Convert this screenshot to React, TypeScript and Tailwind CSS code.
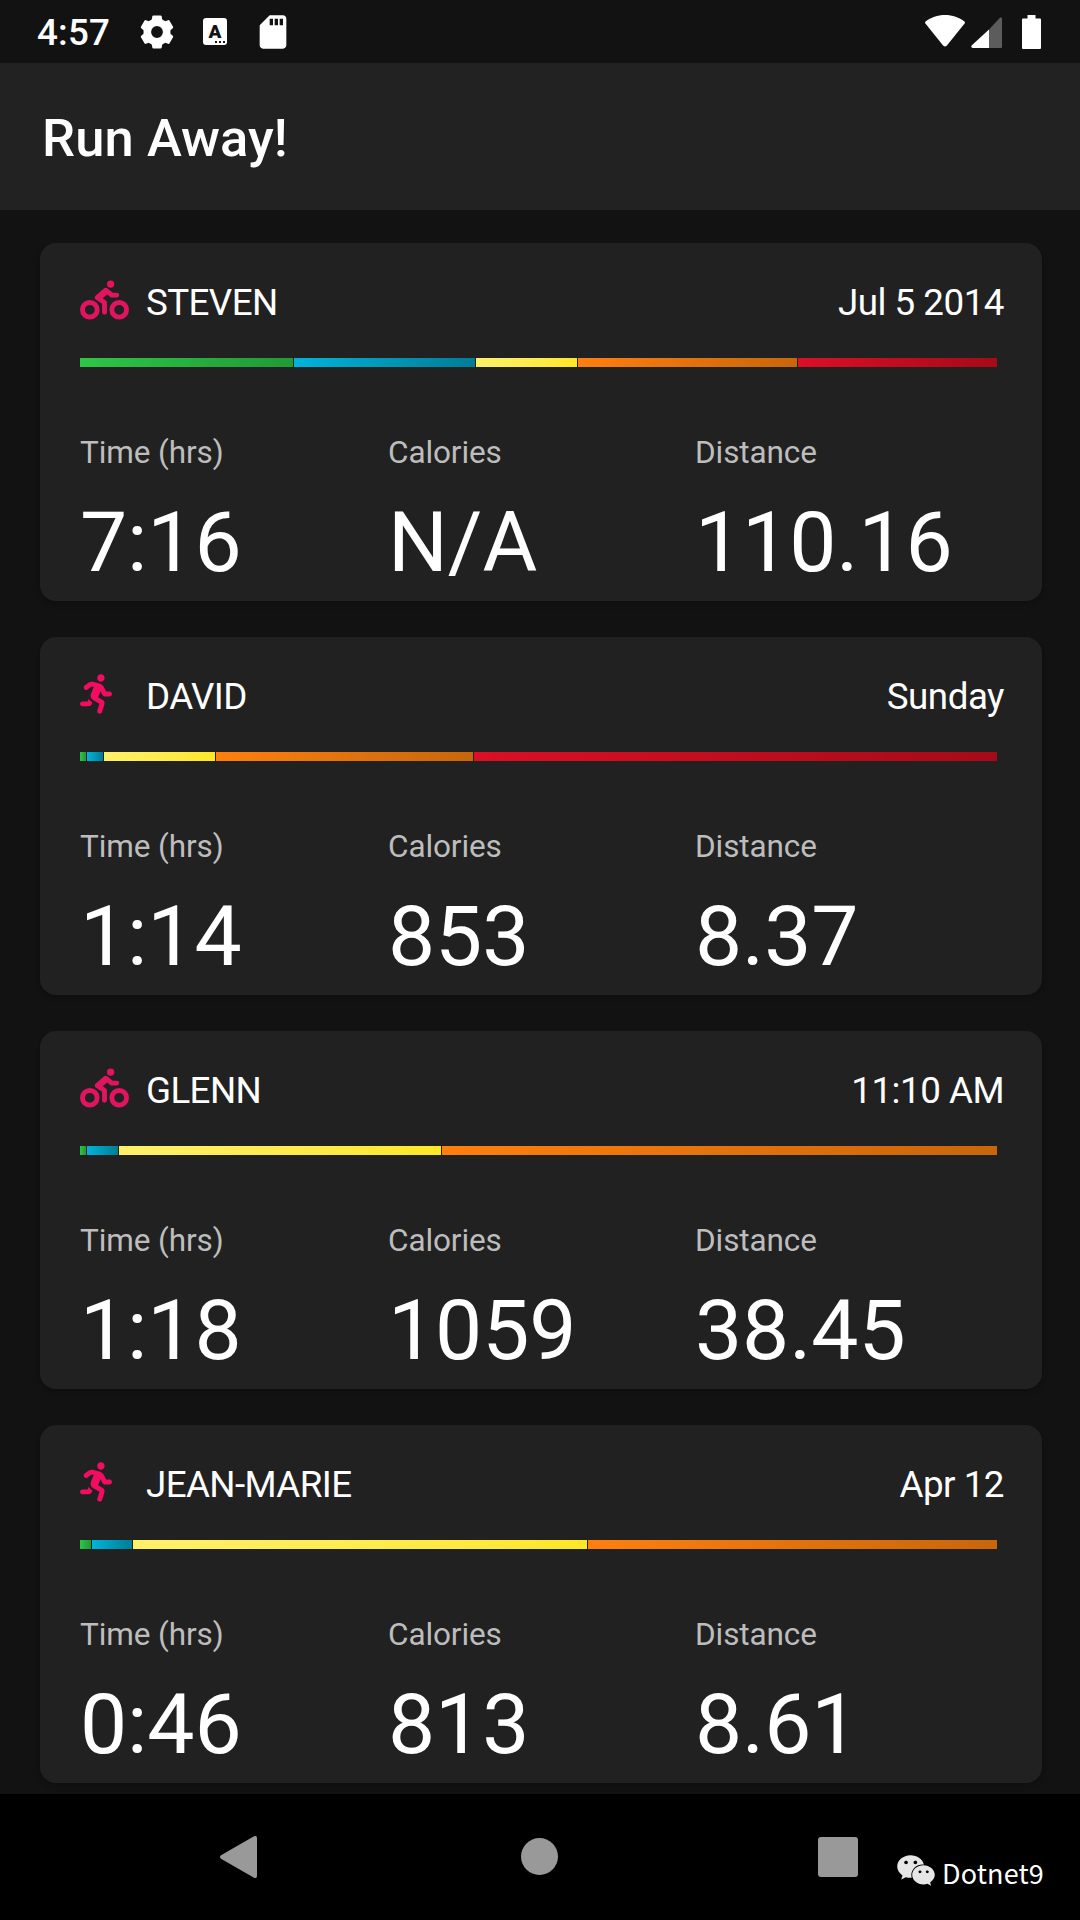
import { FaBiking, FaRunning, FaWeixin } from 'react-icons/fa'
import { MdSdStorage } from 'react-icons/md'
import { clsx } from 'clsx'

type Zone = 'easy' | 'light' | 'moderate' | 'hard' | 'max'

type Workout = {
  name: string
  date: string
  sport: 'bike' | 'run'
  zones: [Zone, number][]
  time: string
  calories: string
  distance: string
}

const ZONE_COLORS: Record<Zone, string> = {
  easy:     'from-[#2dc648] to-[#209a35]',
  light:    'from-[#00b4dc] to-[#007d96]',
  moderate: 'from-[#fff06a] to-[#fde725]',
  hard:     'from-[#ff7f0f] to-[#c9660a]',
  max:      'from-[#dc0f25] to-[#a60a18]',
}

const WORKOUTS: Workout[] = [
  {
    name: 'STEVEN',
    date: 'Jul 5 2014',
    sport: 'bike',
    zones: [['easy', 213], ['light', 181], ['moderate', 101], ['hard', 219], ['max', 199]],
    time: '7:16',
    calories: 'N/A',
    distance: '110.16',
  },
  {
    name: 'DAVID',
    date: 'Sunday',
    sport: 'run',
    zones: [['easy', 6], ['light', 16], ['moderate', 111], ['hard', 257], ['max', 523]],
    time: '1:14',
    calories: '853',
    distance: '8.37',
  },
  {
    name: 'GLENN',
    date: '11:10 AM',
    sport: 'bike',
    zones: [['easy', 6], ['light', 31], ['moderate', 322], ['hard', 556]],
    time: '1:18',
    calories: '1059',
    distance: '38.45',
  },
  {
    name: 'JEAN-MARIE',
    date: 'Apr 12',
    sport: 'run',
    zones: [['easy', 11], ['light', 40], ['moderate', 455], ['hard', 409]],
    time: '0:46',
    calories: '813',
    distance: '8.61',
  },
]

const GEAR_TEETH = [0, 60, 120, 180, 240, 300]

function GearIcon() {
  return (
    <svg className="h-10 w-10" viewBox="0 0 40 40">
      <circle cx="20" cy="20" r="9.700" fill="none" stroke="currentColor" strokeWidth="7.600" />
      {GEAR_TEETH.map((deg) => (
        <path
          key={deg}
          d="M16.500 3.500h7q1 0 1.200 1l1.300 7.500h-12l1.300-7.500q.2-1 1.200-1Z"
          fill="currentColor"
          transform={`rotate(${deg} 20 20)`}
        />
      ))}
    </svg>
  )
}

function StatusBar() {
  return (
    <div className="flex h-[63px] shrink-0 items-center justify-between pl-[37px] pr-[39px]">
      <div className="flex items-center">
        <span className="w-[100px] pt-[3px] text-[36.75px] font-medium leading-[42px] tracking-[0.2px]">4:57</span>
        <GearIcon />
        <span className="relative ml-[26px] flex h-[27px] w-6 justify-center rounded-[3px] bg-white text-[19px] font-black leading-[27px] text-[#121212]">
          A
          <span className="absolute bottom-0.5 right-0.5 flex gap-0.5">
            <i className="h-0.5 w-0.5 bg-[#121212]" />
            <i className="h-0.5 w-0.5 bg-[#121212]" />
            <i className="h-0.5 w-0.5 bg-[#121212]" />
          </span>
        </span>
        <MdSdStorage className="ml-[26px] h-10 w-10" />
      </div>
      <div className="flex items-start">
        <svg className="h-8 w-10" viewBox="0 0 40 32" fill="currentColor">
          <path d="M20 0C12.500 0 5.700 2.500.6 6.400Q-.4 7.300.4 8.400L18.300 30.700Q20 32.300 21.700 30.700L39.600 8.400Q40.400 7.300 39.400 6.400C34.300 2.500 27.500 0 20 0Z" />
        </svg>
        <svg className="ml-1.5 mt-0.5 h-[31px] w-[31px]" viewBox="0 0 31 31">
          <path d="M18 12.500V31H1.500Q-.5 30 .6 28.600Z" fill="#fff" />
          <path d="M18 12.500L29 .8Q31-.6 31 2V30Q31 31 30 31H18Z" fill="#5c5c5c" />
        </svg>
        <svg className="ml-5 h-[34px] w-[19px]" viewBox="0 0 19 34" fill="currentColor">
          <path d="M5.500 0h8v3.500H18q1 0 1 1V33q0 1-1 1H1q-1 0-1-1V4.500q0-1 1-1h4.500Z" />
        </svg>
      </div>
    </div>
  )
}

function Stat({ label, value }: { label: string; value: string }) {
  return (
    <div>
      <div className="text-[31.5px] leading-[37px] tracking-[-0.1px] text-[#bdbdbd]">{label}</div>
      <div className="mt-[23px] text-[84px] leading-[98px] tracking-[-0.1px]">{value}</div>
    </div>
  )
}

function WorkoutCard({ workout }: { workout: Workout }) {
  const Icon = workout.sport === 'bike' ? FaBiking : FaRunning

  return (
    <div className="h-[358px] shrink-0 rounded-2xl bg-[#212121] pl-10 pr-[38px] pt-[37px] shadow-md">
      <div className="flex h-11 items-start text-[36.75px] leading-[46px] tracking-[-0.6px]">
        <div className="w-[66px]">
          <Icon
            className={clsx(
              'h-10',
              workout.sport === 'bike' ? 'w-[49px] text-[#e3145f]' : 'w-8 text-[#f20d62]',
            )}
          />
        </div>
        <span>{workout.name}</span>
        <span className="ml-auto tracking-[-0.5px]">{workout.date}</span>
      </div>
      <div className="mr-[7px] mt-[34px] flex h-[9px] gap-px">
        {workout.zones.map(([zone, size]) => (
          <div
            key={zone}
            className={clsx('basis-0 bg-linear-to-r', ZONE_COLORS[zone])}
            style={{ flexGrow: size }}
          />
        ))}
      </div>
      <div className="mt-[67px] grid grid-cols-[308px_307px_1fr]">
        <Stat label="Time (hrs)" value={workout.time} />
        <Stat label="Calories" value={workout.calories} />
        <Stat label="Distance" value={workout.distance} />
      </div>
    </div>
  )
}

function NavBar() {
  return (
    <div className="relative flex h-[126px] shrink-0 items-start bg-black pt-[42px] text-[#999]">
      <svg className="ml-[220px] h-[42px] w-[37px]" viewBox="0 0 37 42" fill="currentColor">
        <path d="M34 .3Q37-.8 37 2V40Q37 42.800 34 41.700L1 22.700Q-1 21 1 19.300Z" />
      </svg>
      <div className="ml-[264px] mt-0.5 h-[37px] w-[37px] rounded-full bg-[#999]" />
      <div className="ml-[260px] mt-px h-10 w-10 rounded-[3px] bg-[#999]" />
      <div className="absolute left-[896px] top-[59px] flex items-start text-[#e6e6e6]">
        <FaWeixin className="h-[35px] w-10" />
        <span className="ml-1.5 mt-[2px] font-['Noto_Sans_CJK_SC',sans-serif] text-[27px] leading-[36px] tracking-[0.15px] text-white">
          Dotnet9
        </span>
      </div>
    </div>
  )
}

export default function App() {
  return (
    <div className="flex h-[1920px] w-[1080px] flex-col overflow-hidden bg-[#121212] font-[Roboto,sans-serif] text-white">
      <StatusBar />
      <header className="flex h-[147px] shrink-0 items-center bg-[#222] pl-[42px] pt-[3px]">
        <h1 className="text-[52.5px] font-medium leading-[62px] tracking-[0.1px]">Run Away!</h1>
      </header>
      <main className="flex h-[1584px] shrink-0 flex-col gap-9 pl-10 pr-[38px] pt-[33px]">
        {WORKOUTS.map((w) => (
          <WorkoutCard key={w.name} workout={w} />
        ))}
      </main>
      <NavBar />
    </div>
  )
}
